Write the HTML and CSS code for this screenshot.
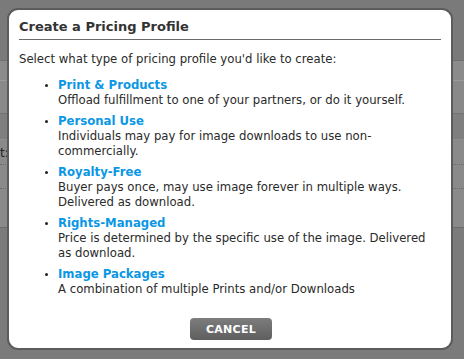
FILE: index.html
```html
<!DOCTYPE html>
<html>
<head>
<meta charset="utf-8">
<link rel="stylesheet" href="styles.css">
</head>
<body>
<div class="backdrop">
  <div class="bg-row bg-top"></div>
  <div class="bg-row bg-a"></div>
  <div class="bg-row bg-b"></div>
  <div class="bg-row bg-c"></div>
  <div class="bg-row bg-d">
    <span class="bg-label">t:</span>
    <div class="dots"></div>
    <div class="dots"></div>
  </div>
  <div class="bg-row bg-e"></div>
</div>
<div class="dialog">
  <h1 class="title">Create a Pricing Profile</h1>
  <p class="intro">Select what type of pricing profile you'd like to create:</p>
  <ul class="options">
    <li><a class="opt">Print &amp; Products</a><div class="desc">Offload fulfillment to one of your partners, or do it yourself.</div></li>
    <li><a class="opt">Personal Use</a><div class="desc">Individuals may pay for image downloads to use non-commercially.</div></li>
    <li><a class="opt">Royalty-Free</a><div class="desc">Buyer pays once, may use image forever in multiple ways. Delivered as download.</div></li>
    <li><a class="opt">Rights-Managed</a><div class="desc">Price is determined by the specific use of the image. Delivered as download.</div></li>
    <li><a class="opt">Image Packages</a><div class="desc">A combination of multiple Prints and/or Downloads</div></li>
  </ul>
  <div class="actions"><button class="cancel">CANCEL</button></div>
</div>
</body>
</html>
```
FILE: styles.css
```css
html, body { margin: 0; padding: 0; }
body {
  width: 464px; height: 359px; overflow: hidden; position: relative;
  background: #7b7b7b;
  font-family: "DejaVu Sans", Verdana, sans-serif;
}
.backdrop { display: flex; flex-direction: column; }
.bg-row { box-sizing: border-box; }
.bg-top { height: 60px; background: #7a7a7a; }
.bg-a { height: 21px; background: #8b8b8b; border-top: 1px solid #6f6f6f; border-bottom: 1px solid #9a9a9a; }
.bg-b { height: 33px; background: #898989; border-bottom: 1px solid #727272; }
.bg-c { height: 26px; background: #7f7f7f; border-bottom: 1px solid #8f8f8f; }
.bg-d { height: 88px; background: #8a8a8a; border-bottom: 1px solid #6c6c6c; padding-top: 5px; }
.bg-label { display: block; font-size: 12px; color: #222; line-height: 16px; padding-left: 0; }
.dots { border-top: 1px dotted #6e6e6e; margin-top: 3px; height: 20px; }
.bg-e { flex: 1; height: 140px; background: #7c7c7c; }

.dialog {
  position: absolute; left: 7px; top: 8px;
  width: 446px; height: 342px; box-sizing: border-box;
  background: #fff;
  border: 2px solid #5c5c5c;
  border-radius: 11px;
  padding: 0 10px 0 10px;
  display: flex; flex-direction: column;
}
.title {
  margin: 0; font-size: 13px; font-weight: bold; color: #333;
  padding: 9px 0 4px 0; line-height: 16px;
  border-bottom: 1px solid #6b6b6b;
}
.intro { margin: 11px 0 0 0; font-size: 11.7px; line-height: 16px; color: #2a2a2a; }
.options { list-style: none; margin: 10px 0 0 0; padding: 0 0 0 39px; }
.options li { position: relative; margin-bottom: 5px; }
.options li::before {
  content: ""; position: absolute; left: -13px; top: 7px;
  width: 3px; height: 3px; border-radius: 50%; background: #222;
}
.opt { display: block; color: #0b97e4; font-weight: bold; font-size: 11.7px; line-height: 16px; }
.desc { font-size: 11.7px; line-height: 15px; color: #2a2a2a; padding-right: 4px; }
.actions { margin-top: auto; display: flex; justify-content: center; padding-bottom: 8px; }
.cancel {
  width: 82px; height: 22px; border: 0; border-radius: 4px;
  background: linear-gradient(#7d7d7d, #5e5e5e);
  color: #fff; font-family: "DejaVu Sans", sans-serif; font-weight: bold; font-size: 11px;
  letter-spacing: 0.3px; padding: 0; margin-left: 2px;
}
```
